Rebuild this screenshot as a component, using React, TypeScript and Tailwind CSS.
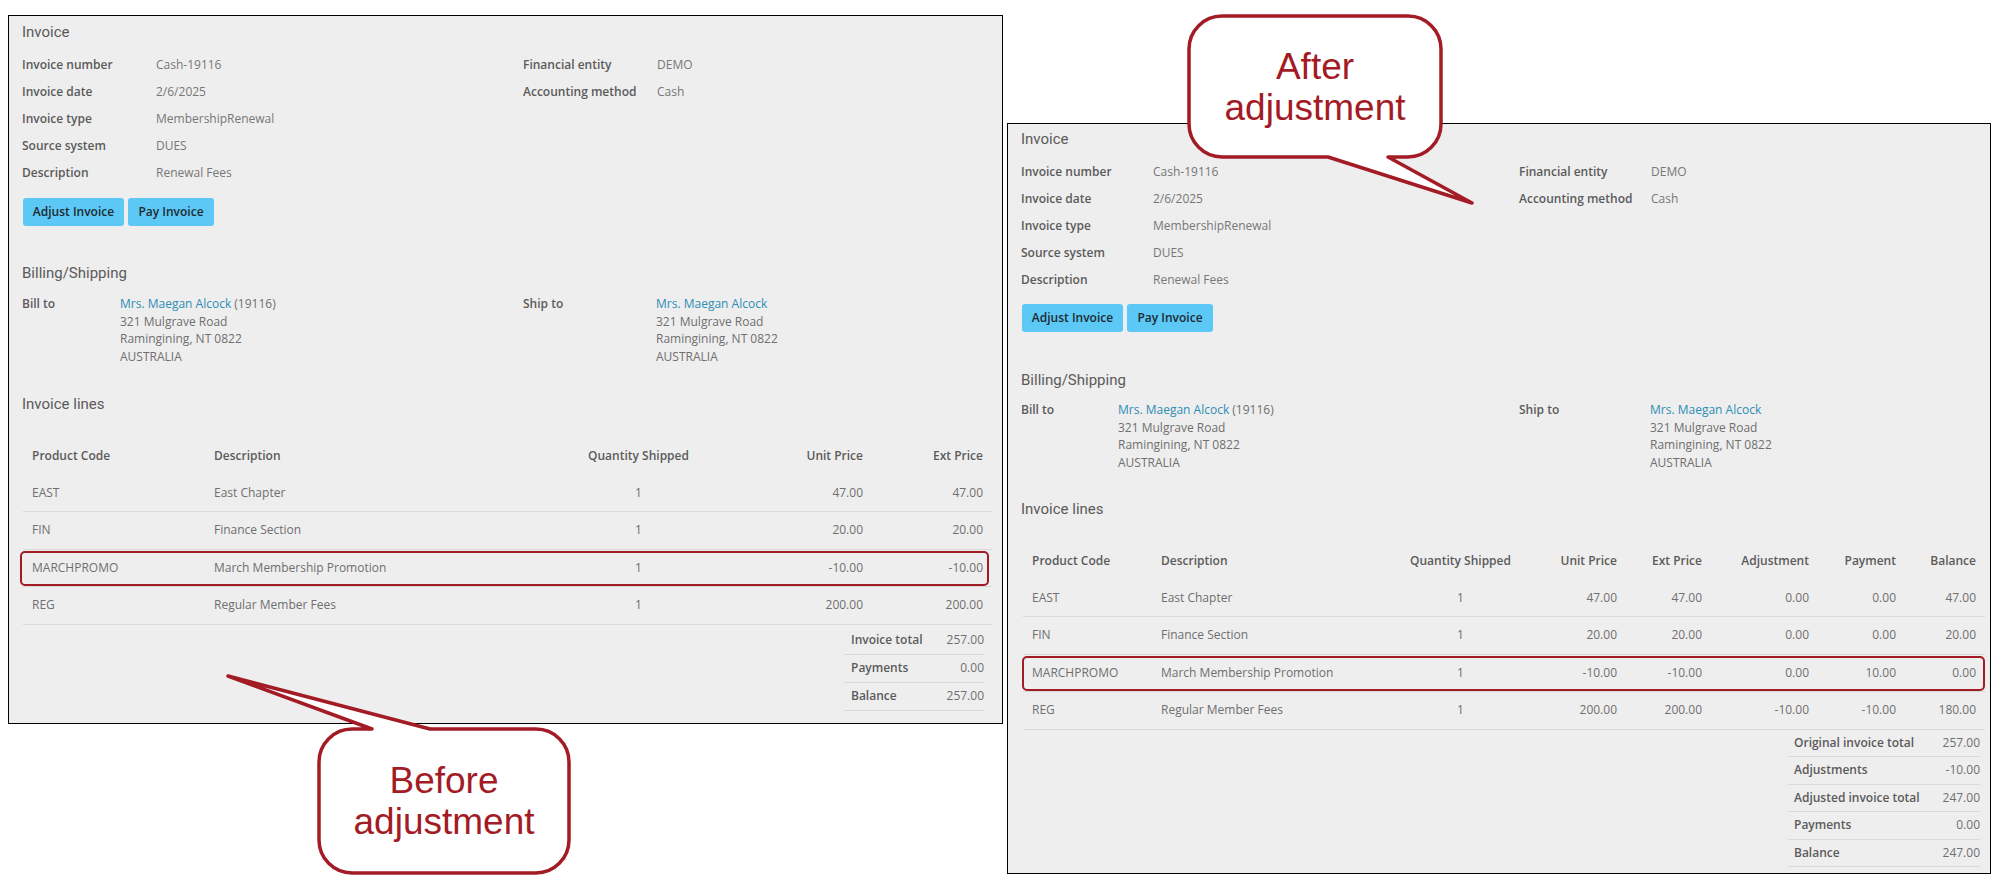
import React from 'react'

type Line = string[]

const beforeLines: Line[] = [
  ['EAST', 'East Chapter', '1', '47.00', '47.00'],
  ['FIN', 'Finance Section', '1', '20.00', '20.00'],
  ['MARCHPROMO', 'March Membership Promotion', '1', '-10.00', '-10.00'],
  ['REG', 'Regular Member Fees', '1', '200.00', '200.00'],
]

const afterLines: Line[] = [
  ['EAST', 'East Chapter', '1', '47.00', '47.00', '0.00', '0.00', '47.00'],
  ['FIN', 'Finance Section', '1', '20.00', '20.00', '0.00', '0.00', '20.00'],
  ['MARCHPROMO', 'March Membership Promotion', '1', '-10.00', '-10.00', '0.00', '10.00', '0.00'],
  ['REG', 'Regular Member Fees', '1', '200.00', '200.00', '-10.00', '-10.00', '180.00'],
]

const beforeTotals = [
  ['Invoice total', '257.00'],
  ['Payments', '0.00'],
  ['Balance', '257.00'],
]

const afterTotals = [
  ['Original invoice total', '257.00'],
  ['Adjustments', '-10.00'],
  ['Adjusted invoice total', '247.00'],
  ['Payments', '0.00'],
  ['Balance', '247.00'],
]

const baseHeads = ['Product Code', 'Description', 'Quantity Shipped', 'Unit Price', 'Ext Price']
const extraHeads = ['Adjustment', 'Payment', 'Balance']

const info = [
  ['Invoice number', 'Cash-19116'],
  ['Invoice date', '2/6/2025'],
  ['Invoice type', 'MembershipRenewal'],
  ['Source system', 'DUES'],
  ['Description', 'Renewal Fees'],
]

const info2 = [
  ['Financial entity', 'DEMO'],
  ['Accounting method', 'Cash'],
]

const address = ['321 Mulgrave Road', 'Ramingining, NT 0822', 'AUSTRALIA']

function cellAlign(i: number) {
  if (i < 2) return 'text-left'
  if (i === 2) return 'text-center'
  return 'text-right'
}

function Panel({ after }: { after: boolean }) {
  const lines = after ? afterLines : beforeLines
  const heads = after ? [...baseHeads, ...extraHeads] : baseHeads
  const totals = after ? afterTotals : beforeTotals
  const grid = after
    ? 'grid grid-cols-[129px_249px_119px_106px_85px_107px_87px_80px]'
    : 'grid grid-cols-[182px_374px_119px_174px_120px]'
  const labelCol = after ? 'w-[132px]' : 'w-[134px]'
  const leftCol = after ? 'w-[498px]' : 'w-[501px]'
  const billCol = after ? 'w-[97px]' : 'w-[98px]'
  const shipCol = after ? 'w-[131px]' : 'w-[133px]'

  return (
    <div
      className={`bg-[#eeeeee] border border-black px-[13px] font-['Open_Sans',sans-serif] text-[12px] ${
        after ? 'ml-[4px] mt-[123px] w-[984px] pt-[4px] pb-[6px]' : 'ml-[8px] mt-[15px] w-[995px] pt-[5px] pb-[12px]'
      }`}
    >
      <h2 className="h-[22px] leading-[22px] text-[15px] text-[#5a5a5a] font-['Roboto',sans-serif]">Invoice</h2>

      {/* header info */}
      <div className="flex mt-[8px]">
        <div className={leftCol}>
          {info.map(([k, v]) => (
            <div key={k} className="flex h-[27px] items-center">
              <span className={`${labelCol} font-semibold text-[#5b5b5b]`}>{k}</span>
              <span className="text-[#777]">{v}</span>
            </div>
          ))}
        </div>
        <div>
          {info2.map(([k, v]) => (
            <div key={k} className="flex h-[27px] items-center">
              <span className={`${labelCol} font-semibold text-[#5b5b5b]`}>{k}</span>
              <span className="text-[#777]">{v}</span>
            </div>
          ))}
        </div>
      </div>

      <div className={`flex gap-[4px] ml-[1px] ${after ? 'mt-[11px]' : 'mt-[12px]'}`}>
        <button className="h-[28px] w-[101px] rounded-[3px] bg-[#5bc8f5] text-[#1f2a30] font-semibold text-[12px]">Adjust Invoice</button>
        <button className="h-[28px] w-[86px] rounded-[3px] bg-[#5bc8f5] text-[#1f2a30] font-semibold text-[12px]">Pay Invoice</button>
      </div>

      <h2 className={`h-[22px] leading-[22px] text-[15px] text-[#5a5a5a] font-['Roboto',sans-serif] ${after ? 'mt-[37px]' : 'mt-[36px]'}`}>
        Billing/Shipping
      </h2>

      <div className={`flex leading-[17.5px] ${after ? 'mt-[10px]' : 'mt-[11px]'}`}>
        <div className={`${leftCol} flex`}>
          <span className={`${billCol} font-semibold text-[#5b5b5b]`}>Bill to</span>
          <div className="text-[#6f6f6f]">
            <div>
              <span className="text-[#2d8db4]">Mrs. Maegan Alcock</span> (19116)
            </div>
            {address.map(a => (
              <div key={a}>{a}</div>
            ))}
          </div>
        </div>
        <div className="flex">
          <span className={`${shipCol} font-semibold text-[#5b5b5b]`}>Ship to</span>
          <div className="text-[#6f6f6f]">
            <div className="text-[#2d8db4]">Mrs. Maegan Alcock</div>
            {address.map(a => (
              <div key={a}>{a}</div>
            ))}
          </div>
        </div>
      </div>

      <h2 className={`h-[22px] leading-[22px] text-[15px] text-[#5a5a5a] font-['Roboto',sans-serif] ${after ? 'mt-[27px]' : 'mt-[28px]'}`}>
        Invoice lines
      </h2>

      {/* lines table */}
      <div className={`mt-[22px] ${after ? 'w-[962px] ml-[2px]' : 'w-[969px] ml-[1px]'}`}>
        <div className={`${grid} h-[37.5px] items-center`}>
          {heads.map((h, i) => (
            <div key={h} className={`px-[9px] font-semibold text-[#5b5b5b] whitespace-nowrap ${cellAlign(i)}`}>{h}</div>
          ))}
        </div>
        {lines.map(l => (
          <div key={l[0]} className={`${grid} relative h-[37.5px] items-center border-b border-[#d9d9d9]`}>
            {l.map((c, i) => (
              <div key={i} className={`px-[9px] text-[#6f6f6f] whitespace-nowrap ${cellAlign(i)}`}>{c}</div>
            ))}
            {l[0] === 'MARCHPROMO' && (
              <div
                className={`absolute top-[1px] bottom-0 border-2 border-[#a31b25] rounded-[5px] ${
                  after ? '-left-[1px] right-0' : '-left-[3px] right-[3px]'
                }`}
              />
            )}
          </div>
        ))}

        <div className={`ml-auto ${after ? 'w-[192px] mr-[5px]' : 'w-[140px] mr-[8px] mt-[2px]'}`}>
          {totals.map(([k, v]) => (
            <div
              key={k}
              className={`flex items-center justify-between border-b border-[#d9d9d9] ${
                after ? 'h-[27.5px] pl-[6px]' : 'h-[28px] pl-[7px]'
              }`}
            >
              <span className="font-semibold text-[#5b5b5b] whitespace-nowrap">{k}</span>
              <span className="text-[#6f6f6f]">{v}</span>
            </div>
          ))}
        </div>
      </div>
    </div>
  )
}

function AfterCallout() {
  return (
    <div className="absolute left-[1180px] top-[10px] w-[300px] h-[200px]">
      <svg className="absolute inset-0" width="300" height="200" viewBox="0 0 300 200">
        <path
          d="M42 6 H228 A33 33 0 0 1 261 39 V114 A33 33 0 0 1 228 147 H208 L292 193 L148 147 H42 A33 33 0 0 1 9 114 V39 A33 33 0 0 1 42 6 Z"
          fill="#ffffff"
          stroke="#a31b25"
          strokeWidth="3.5"
          strokeLinejoin="round"
        />
      </svg>
      <div className="absolute left-[9px] top-[6px] w-[252px] h-[141px] flex flex-col items-center justify-center font-['Liberation_Sans',Arial,sans-serif] text-[37px] leading-[41px] text-[#a31b25]">
        <span>After</span>
        <span>adjustment</span>
      </div>
    </div>
  )
}

function BeforeCallout() {
  return (
    <div className="absolute left-[220px] top-[670px] w-[355px] h-[210px]">
      <svg className="absolute inset-0" width="355" height="210" viewBox="0 0 355 210">
        <path
          d="M132 59 H152 L8 6 L210 59 H316 A33 33 0 0 1 349 92 V170 A33 33 0 0 1 316 203 H132 A33 33 0 0 1 99 170 V92 A33 33 0 0 1 132 59 Z"
          fill="#ffffff"
          stroke="#a31b25"
          strokeWidth="3.5"
          strokeLinejoin="round"
        />
      </svg>
      <div className="absolute left-[99px] top-[59px] w-[250px] h-[144px] flex flex-col items-center justify-center font-['Liberation_Sans',Arial,sans-serif] text-[37px] leading-[41px] text-[#a31b25]">
        <span>Before</span>
        <span>adjustment</span>
      </div>
    </div>
  )
}

export default function App() {
  return (
    <div className="relative w-[2000px] h-[887px] bg-white overflow-hidden flex items-start">
      <Panel after={false} />
      <Panel after={true} />
      <AfterCallout />
      <BeforeCallout />
    </div>
  )
}
